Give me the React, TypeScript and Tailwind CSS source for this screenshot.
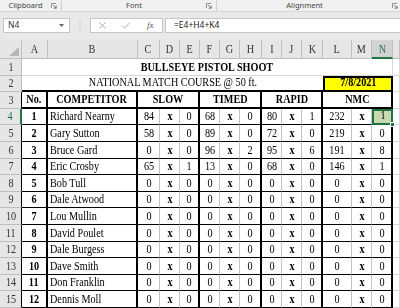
type Score = [number, number];
type Row = { no: number; name: string; slow: Score; timed: Score; rapid: Score; nmc: Score };

const z: Score = [0, 0];

const rows: Row[] = [
  { no: 1, name: "Richard Nearny", slow: [84, 0], timed: [68, 0], rapid: [80, 1], nmc: [232, 1] },
  { no: 2, name: "Gary Sutton", slow: [58, 0], timed: [89, 0], rapid: [72, 0], nmc: [219, 0] },
  { no: 3, name: "Bruce Gard", slow: [0, 0], timed: [96, 2], rapid: [95, 6], nmc: [191, 8] },
  { no: 4, name: "Eric Crosby", slow: [65, 1], timed: [13, 0], rapid: [68, 0], nmc: [146, 1] },
  { no: 5, name: "Bob Tull", slow: z, timed: z, rapid: z, nmc: z },
  { no: 6, name: "Dale Atwood", slow: z, timed: z, rapid: z, nmc: z },
  { no: 7, name: "Lou Mullin", slow: z, timed: z, rapid: z, nmc: z },
  { no: 8, name: "David Poulet", slow: z, timed: z, rapid: z, nmc: z },
  { no: 9, name: "Dale Burgess", slow: z, timed: z, rapid: z, nmc: z },
  { no: 10, name: "Dave Smith", slow: z, timed: z, rapid: z, nmc: z },
  { no: 11, name: "Don Franklin", slow: z, timed: z, rapid: z, nmc: z },
  { no: 12, name: "Dennis Moll", slow: z, timed: z, rapid: z, nmc: z },
];

const letters = ["A", "B", "C", "D", "E", "F", "G", "H", "I", "J", "K", "L", "M", "N"];
// columns that close a bordered group (A, B, E, H, K, N)
const thickRight = [0, 1, 4, 7, 10, 13];

// the screenshot is squeezed sideways, so cell text is narrowed to match
function T({ children, left = false, className = "" }: { children: React.ReactNode; left?: boolean; className?: string }) {
  return (
    <span className={`inline-block whitespace-nowrap scale-x-[0.85] ${left ? "origin-left" : "origin-center"} ${className}`}>
      {children}
    </span>
  );
}

function Launcher() {
  return (
    <svg width="6" height="6" viewBox="0 0 6 6" className="shrink-0">
      <path d="M0.5 5V0.5H5" fill="none" stroke="#7a7a7a" strokeWidth="0.8" />
      <path d="M2 2L5.2 5.2M5.2 2.8V5.2H2.8" fill="none" stroke="#5a5a5a" strokeWidth="0.8" />
    </svg>
  );
}

function RibbonLabels() {
  return (
    <div className="flex h-[12px] border-b border-[#d6d6d6] bg-[#f0f0f0] font-['Noto_Sans',sans-serif] text-[7.5px] leading-none text-[#444]">
      <div className="flex w-[62px] items-center border-r border-[#cfcfcf] pr-[4px]">
        <span className="flex-1 text-center">Clipboard</span>
        <Launcher />
      </div>
      <div className="flex w-[155px] items-center border-r border-[#cfcfcf] pr-[4px]">
        <span className="flex-1 text-center">Font</span>
        <Launcher />
      </div>
      <div className="flex flex-1 items-center pr-[2px]">
        <span className="flex-1 text-center">Alignment</span>
        <Launcher />
      </div>
    </div>
  );
}

function FormulaBar() {
  return (
    <div className="flex h-[28px] items-start pt-[6px] font-['Noto_Sans',sans-serif] text-[8.5px] text-[#333]">
      <div className="ml-[3px] flex h-[15px] w-[67px] items-center justify-between border border-[#c6c6c6] bg-white pl-[4px] pr-[5px]">
        <span>N4</span>
        <svg width="5" height="3" viewBox="0 0 5 3">
          <path d="M0 0H5L2.5 3Z" fill="#666" />
        </svg>
      </div>
      <div className="flex h-[15px] w-[20px] items-center justify-center">
        <svg width="2" height="8" viewBox="0 0 2 8">
          <circle cx="1" cy="1" r="0.7" fill="#b0b0b0" />
          <circle cx="1" cy="4" r="0.7" fill="#b0b0b0" />
          <circle cx="1" cy="7" r="0.7" fill="#b0b0b0" />
        </svg>
      </div>
      <div className="grid h-[15px] w-[73px] grid-cols-3 place-items-center border border-[#c6c6c6] bg-white">
        <svg width="7" height="7" viewBox="0 0 7 7">
          <path d="M0.5 0.5L6.5 6.5M6.5 0.5L0.5 6.5" stroke="#a6a6a6" strokeWidth="0.9" />
        </svg>
        <svg width="8" height="7" viewBox="0 0 8 7">
          <path d="M0.5 3.8L2.8 6.2L7.5 0.8" fill="none" stroke="#a6a6a6" strokeWidth="0.9" />
        </svg>
        <span className="font-['Liberation_Serif',serif] text-[9px] italic text-[#555]">fx</span>
      </div>
      <div className="ml-[2px] flex h-[15px] flex-1 items-center border-y border-l border-[#c6c6c6] bg-white pl-[8px] text-[#222]">
        =E4+H4+K4
      </div>
    </div>
  );
}

const hdr = "flex items-center justify-center bg-[#e6e6e6] border-r border-b border-[#bfbfbf] text-[#333]";
const rowHdr = "flex items-end justify-center pb-px leading-[14px] bg-[#e6e6e6] border-b border-b-[#bfbfbf] text-[#333]";
const cell = "flex items-end justify-center pb-px leading-[14px]";
const grid = "border-r border-b border-[#d9d9d9]";

function RowHead({ n }: { n: number }) {
  if (n === 4) {
    return (
      <div className={`${rowHdr} border-r-2 border-r-[#217346] bg-[#d3d3d3] text-[#217346]`}>
        <T>{n}</T>
      </div>
    );
  }
  return (
    <div className={`${rowHdr} border-r ${n >= 3 ? "border-r-black" : "border-r-[#bfbfbf]"}`}>
      <T>{n}</T>
    </div>
  );
}

function DataRow({ row, r }: { row: Row; r: number }) {
  const vals: (string | number)[] = [
    row.slow[0], "x", row.slow[1],
    row.timed[0], "x", row.timed[1],
    row.rapid[0], "x", row.rapid[1],
    row.nmc[0], "x", row.nmc[1],
  ];
  const edge = (i: number) =>
    thickRight.includes(i) ? "border-r-2 border-r-black" : "border-r border-r-[#c4c4c4]";
  return (
    <>
      <RowHead n={r} />
      <div className={`${cell} border-b border-b-black ${edge(0)} font-bold`}>
        <T>{row.no}</T>
      </div>
      <div className={`${cell} justify-start pl-[2px] border-b border-b-black ${edge(1)}`}>
        <T left className="blur-[0.5px]">{row.name}</T>
      </div>
      {vals.map((v, i) => {
        const col = i + 2;
        if (r === 4 && col === 13) {
          return (
            <div key={i} className={`${cell} relative border-2 border-[#217346] bg-[#c6dab0]`}>
              <T>{v}</T>
              <span className="absolute -bottom-[4px] -right-[4px] h-[5px] w-[5px] border border-white bg-[#217346]" />
            </div>
          );
        }
        return (
          <div key={i} className={`${cell} border-b border-b-black ${edge(col)} ${v === "x" ? "font-bold" : ""}`}>
            <T>{v}</T>
          </div>
        );
      })}
      <div className={grid} />
    </>
  );
}

function Sheet() {
  const head3 = `${cell} font-bold border-r-2 border-r-black border-b-2 border-b-black`;
  return (
    <div className="grid flex-1 grid-cols-[22px_26px_90px_22px_20px_20px_20px_20px_22px_20px_20px_21px_29px_20px_21px_1fr] grid-rows-[19px_repeat(15,16.6px)] bg-white font-['Liberation_Serif',serif] text-[12px] text-black">
      {/* column letters */}
      <div className="flex items-end justify-end border-r border-b border-[#bfbfbf] bg-[#e6e6e6] pb-[2px] pr-[2px]">
        <svg width="10" height="9" viewBox="0 0 10 9">
          <path d="M10 0V9H0Z" fill="#b5b5b5" />
        </svg>
      </div>
      {letters.map((l) =>
        l === "N" ? (
          <div key={l} className="flex items-center justify-center border-r border-r-[#bfbfbf] border-b-2 border-b-[#217346] bg-[#d3d3d3] text-[#217346]">
            <T>{l}</T>
          </div>
        ) : (
          <div key={l} className={hdr}>
            <T>{l}</T>
          </div>
        )
      )}
      <div className={hdr} />

      {/* row 1 */}
      <RowHead n={1} />
      <div className={`${cell} col-span-14 font-bold ${grid}`}>
        <T>BULLSEYE PISTOL SHOOT</T>
      </div>
      <div className={grid} />

      {/* row 2 */}
      <RowHead n={2} />
      <div className={`${cell} col-span-11 border-b-2 border-b-black`}>
        <T>NATIONAL MATCH COURSE @ 50 ft.</T>
      </div>
      <div className={`${cell} col-span-3 border-2 border-black bg-[#ffff00] font-bold`}>
        <T>7/8/2021</T>
      </div>
      <div className={grid} />

      {/* row 3 */}
      <RowHead n={3} />
      <div className={head3}>
        <T>No.</T>
      </div>
      <div className={head3}>
        <T>COMPETITOR</T>
      </div>
      <div className={`${head3} col-span-3`}>
        <T>SLOW</T>
      </div>
      <div className={`${head3} col-span-3`}>
        <T>TIMED</T>
      </div>
      <div className={`${head3} col-span-3`}>
        <T>RAPID</T>
      </div>
      <div className={`${head3} col-span-3`}>
        <T>NMC</T>
      </div>
      <div className={grid} />

      {rows.map((row, i) => (
        <DataRow key={row.no} row={row} r={i + 4} />
      ))}
    </div>
  );
}

export default function App() {
  return (
    <div className="flex h-[308px] w-[400px] flex-col overflow-hidden bg-[#e9e9e9]">
      <RibbonLabels />
      <FormulaBar />
      <Sheet />
    </div>
  );
}
